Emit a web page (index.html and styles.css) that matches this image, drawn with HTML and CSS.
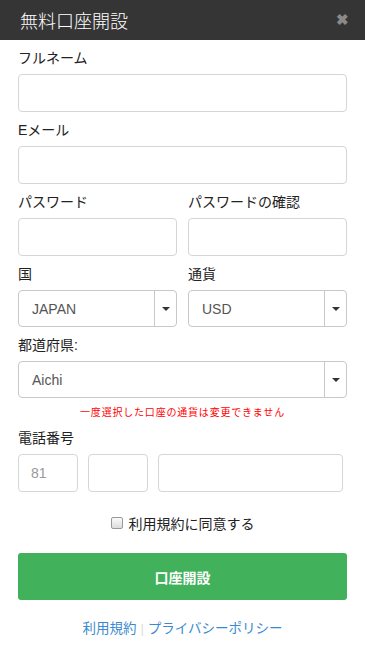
FILE: index.html
```html
<!DOCTYPE html>
<html lang="ja">

<head>
    <meta charset="UTF-8">
    <meta name="viewport" content="width=device-width, initial-scale=1.0">
    <title>無料口座開設</title>
    <link rel="stylesheet" href="styles.css">
</head>

<body>
    <div class="modal">
        <div class="modal-header">
            <span class="modal-title">無料口座開設</span>
            <span class="modal-close">&#10006;</span>
        </div>

        <form class="modal-body">
            <div class="group">
                <label>フルネーム</label>
                <input type="text" class="field">
            </div>

            <div class="group">
                <label>Eメール</label>
                <input type="email" class="field">
            </div>

            <div class="row">
                <div class="group">
                    <label>パスワード</label>
                    <input type="password" class="field">
                </div>
                <div class="group">
                    <label>パスワードの確認</label>
                    <input type="password" class="field">
                </div>
            </div>

            <div class="row">
                <div class="group">
                    <label>国</label>
                    <div class="select">
                        <span class="select-value">JAPAN</span>
                        <span class="select-caret"></span>
                    </div>
                </div>
                <div class="group">
                    <label>通貨</label>
                    <div class="select">
                        <span class="select-value">USD</span>
                        <span class="select-caret"></span>
                    </div>
                </div>
            </div>

            <div class="group">
                <label>都道府県:</label>
                <div class="select">
                    <span class="select-value">Aichi</span>
                    <span class="select-caret"></span>
                </div>
            </div>
            <p class="notice">一度選択した口座の通貨は変更できません</p>

            <div class="group phone">
                <label>電話番号</label>
                <div class="phone-row">
                    <input type="text" class="field code" placeholder="81">
                    <input type="text" class="field area">
                    <input type="text" class="field number">
                </div>
            </div>

            <div class="agree">
                <span class="checkbox"></span>
                <span>利用規約に同意する</span>
            </div>

            <button type="button" class="submit">口座開設</button>

            <div class="links">
                <a href="#">利用規約</a>
                <span class="sep">|</span>
                <a href="#">プライバシーポリシー</a>
            </div>
        </form>
    </div>
</body>

</html>
```

FILE: styles.css
```css
body {
    margin: 0;
    padding: 0;
    background: #fff;
    font-family: "Liberation Sans", "Noto Sans CJK JP", sans-serif;
    color: #222;
}

.modal {
    width: 365px;
}

.modal-header {
    height: 40px;
    background: #353535;
    display: flex;
    align-items: center;
    justify-content: space-between;
    padding: 0 16px 0 20px;
}

.modal-title {
    color: #fff;
    font-size: 18px;
    font-weight: 300;
}

.modal-close {
    color: #8a8a8a;
    font-size: 15px;
    font-weight: bold;
}

.modal-body {
    padding: 0 18px;
}

.group label {
    display: block;
    height: 20px;
    line-height: 20px;
    margin: 8px 0 6px;
    font-size: 14px;
    color: #222;
}

.field {
    display: block;
    box-sizing: border-box;
    width: 100%;
    height: 38px;
    border: 1px solid #d5d5d5;
    border-radius: 4px;
    padding: 0 12px;
    font-size: 14px;
    font-family: inherit;
    outline: none;
}

.field::placeholder {
    color: #999;
}

.row {
    display: flex;
    gap: 11px;
}

.row .group {
    flex: 1;
}

.select {
    display: flex;
    box-sizing: border-box;
    height: 37px;
    border: 1px solid #c8c8c8;
    border-radius: 4px;
}

.select-value {
    flex: 1;
    display: flex;
    align-items: center;
    padding-left: 13px;
    font-size: 14px;
    color: #555;
}

.select-caret {
    width: 21px;
    border-left: 1px solid #c8c8c8;
    display: flex;
    align-items: center;
    justify-content: center;
}

.select-caret::after {
    content: "";
    border-left: 4px solid transparent;
    border-right: 4px solid transparent;
    border-top: 4px solid #333;
}

.notice {
    margin: 0;
    height: 23px;
    line-height: 30px;
    text-align: center;
    font-size: 10px;
    letter-spacing: 0.8px;
    color: #f00;
}

.phone label {
    margin-top: 7px;
}

.phone-row {
    display: flex;
    gap: 10px;
}

.phone-row .code,
.phone-row .area {
    width: 60px;
}

.phone-row .number {
    width: 185px;
}

.agree {
    display: flex;
    align-items: center;
    justify-content: center;
    gap: 6px;
    margin-top: 22px;
    height: 18px;
    font-size: 14px;
}

.checkbox {
    width: 10px;
    height: 10px;
    border: 1px solid #999;
    border-radius: 2px;
    background: linear-gradient(#fafafa, #dcdcdc);
}

.submit {
    display: block;
    width: 100%;
    height: 47px;
    margin-top: 21px;
    border: none;
    border-radius: 3px;
    background: #41b15b;
    color: #fff;
    font-size: 14px;
    font-weight: bold;
    font-family: inherit;
}

.links {
    margin-top: 17px;
    text-align: center;
    font-size: 13.5px;
}

.links a {
    color: #3b8ad0;
    text-decoration: none;
}

.links .sep {
    color: #ddd;
}
```
